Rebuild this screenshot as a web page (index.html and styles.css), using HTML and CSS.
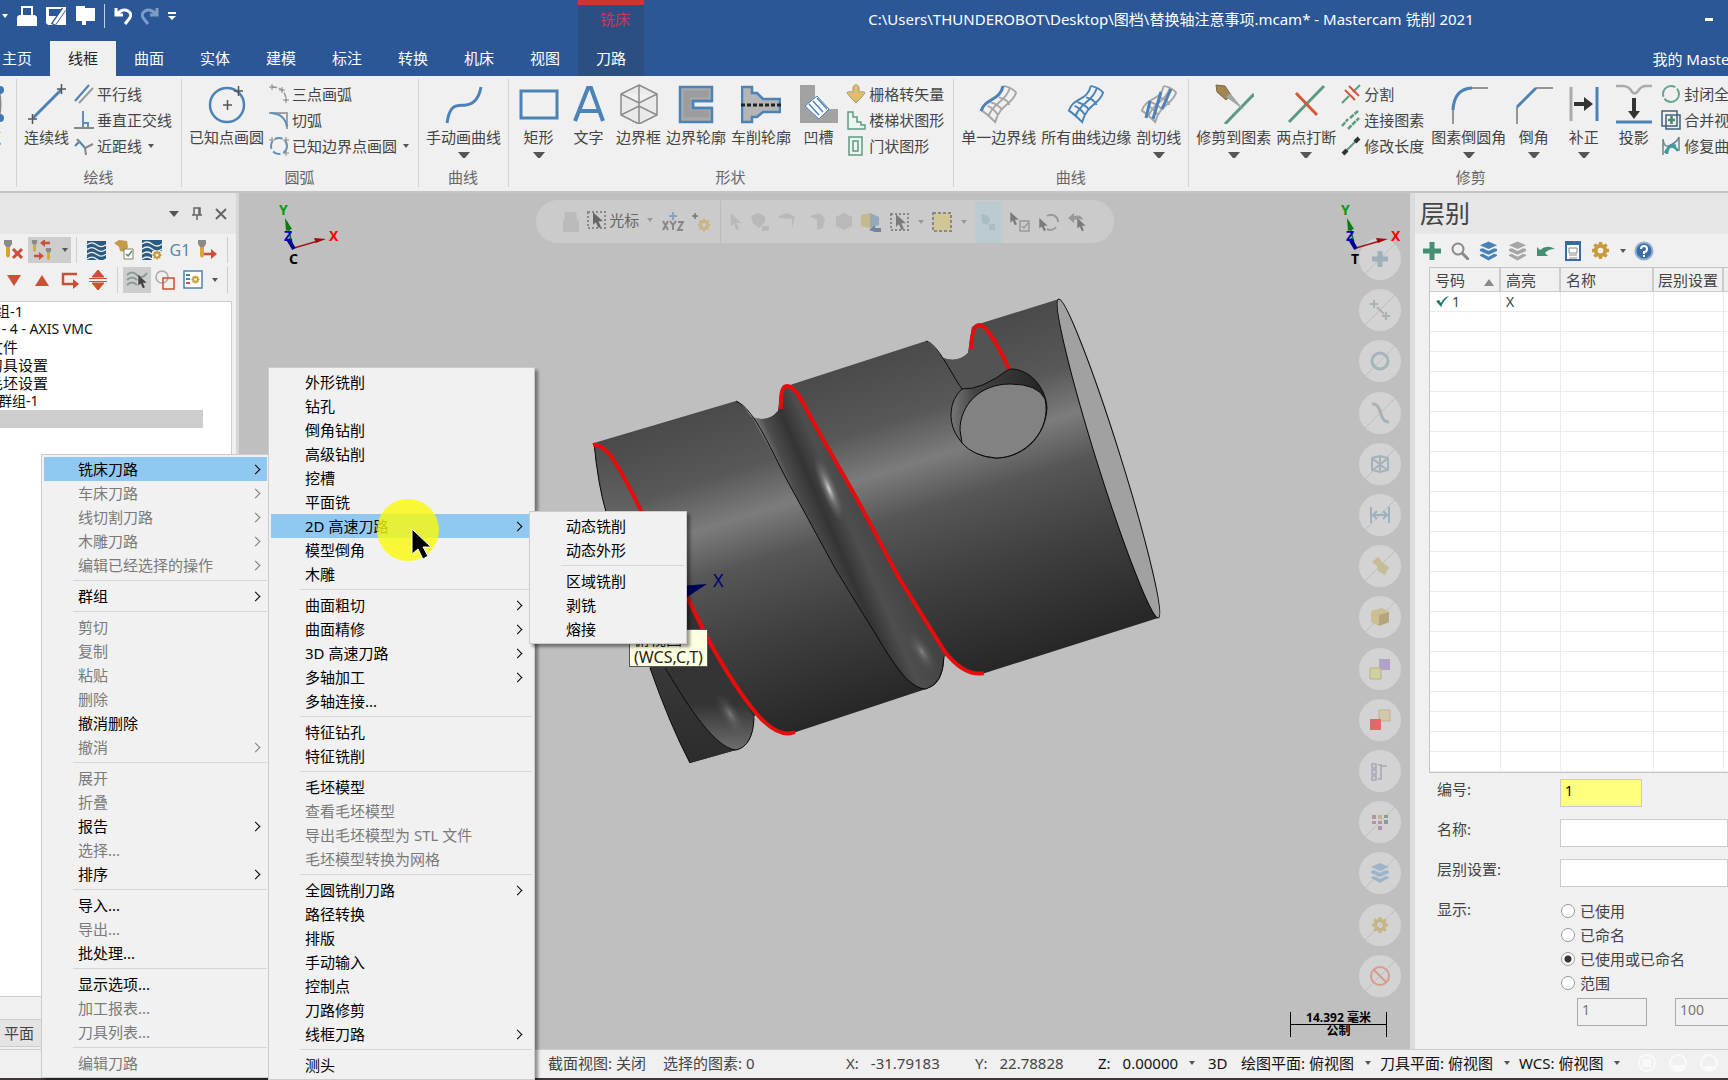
FILE: index.html
```html
<!DOCTYPE html>
<html lang="zh-CN">
<head>
    <meta charset="UTF-8">
    <meta name="viewport" content="width=device-width, initial-scale=1.0">
    <title>Mastercam 铣削 2021</title>
    <link rel="stylesheet" href="styles.css">
</head>
<body>
<svg class="defs" width="0" height="0">
    <symbol id="layers" viewBox="0 0 20 20"><path d="M10 0l9 4-9 4-9-4zM1 8l3-1 6 3 6-3 3 1v2l-9 4-9-4zM1 14l3-1 6 3 6-3 3 1v1l-9 5-9-5z" fill="currentColor"/></symbol>
    <symbol id="gear" viewBox="0 0 20 20"><circle cx="10" cy="10" r="5" fill="none" stroke="currentColor" stroke-width="4"/><path d="M10 1v3M10 16v3M1 10h3M16 10h3M3.600 3.600l2 2M14.400 14.400l2 2M16.400 3.600l-2 2M5.600 14.400l-2 2" stroke="currentColor" stroke-width="3.500"/></symbol>
    <symbol id="pointer" viewBox="0 0 12 20"><path d="M0 0v15l3.500-3 3 7 3-1.500-3-6.500H12z" fill="currentColor"/></symbol>
    <symbol id="waves" viewBox="0 0 20 20"><path d="M0 0h20v20H0z" fill="#2c5a80"/><path d="M0 4q5-4 10 0t10 0M0 9q5-4 10 0t10 0M0 14q5-4 10 0t10 0M0 19q5-4 10 0t10 0" fill="none" stroke="#eef3f6" stroke-width="1.300"/></symbol>
    <symbol id="tool" viewBox="0 0 8 18"><path d="M0 0h8v4L6 7H2L0 4z" fill="#8a8a8a"/><path d="M2 7h4v9l-2 2-2-2z" fill="#d6a62e"/></symbol>
    <symbol id="patch" viewBox="0 0 40 42"><path d="M25 2q9 2 13 7c-4 13-17 12-22 31Q8 32 2 28C6 14 22 18 25 2M31 5C27 19 13 20 9 34M20 14q9 2 11 8M11 19q9 3 12 8M8 23q7 3 11 10" fill="none" stroke="currentColor" stroke-width="2"/></symbol>
    <symbol id="gnomon" viewBox="0 0 70 70">
        <path d="M24 50L18 24" stroke="#087a08" stroke-width="1.500"/><path d="M16 20l7 11-6 2z" fill="#087a08"/>
        <path d="M25 50l24-7" stroke="#a01818" stroke-width="1.500"/><path d="M57 41l-12-1 2 5z" fill="#a00c0c"/>
        <path d="M25 51l-6-10" stroke="#000090" stroke-width="4"/>
    </symbol>
</svg>

<div class="app">
    <header class="header">
        <div class="header-left">
            <div class="quick">
                <i class="caret light"></i>
                <button aria-label="打印"><svg width="20" height="20"><path d="M4 0h12v9h2l2 2v9H0v-9l2-2h2z" fill="#fff"/><path d="M6 2h8v7H6z" fill="#2b5797"/></svg></button>
                <button aria-label="保存"><svg width="20" height="20"><path d="M0 1h20v18H2L0 17z" fill="#fff"/><path d="M3 3h12v7H3z" fill="#2b5797"/><path d="M7 19L18 3" stroke="#2b5797" stroke-width="5"/><path d="M8 18L19 2" stroke="#fff" stroke-width="3"/></svg></button>
                <button aria-label="图档"><svg width="20" height="20"><path d="M1 0h9v2h10v13h-9v4H7v-4H1z" fill="#fff"/></svg></button>
                <span class="quick-line"></span>
                <button aria-label="撤消"><svg width="18" height="18"><path d="M2 1v7h7M3 7Q9 1 14 4t1 8l-4 5" fill="none" stroke="#fff" stroke-width="3"/></svg></button>
                <button aria-label="重做"><svg width="18" height="18"><path d="M16 1v7H9M15 7Q9 1 4 4T3 12l4 5" fill="none" stroke="#7f9cc6" stroke-width="3"/></svg></button>
                <i class="caret light over"></i>
            </div>
            <nav class="tabs">
                <button>主页</button>
                <button class="active">线框</button>
                <button>曲面</button>
                <button>实体</button>
                <button>建模</button>
                <button>标注</button>
                <button>转换</button>
                <button>机床</button>
                <button>视图</button>
            </nav>
        </div>
        <div class="context-tab">
            <span>铣床</span>
            <button>刀路</button>
        </div>
        <div class="header-right">
            <div class="title-row">
                <h1>C:\Users\THUNDEROBOT\Desktop\图档\替换轴注意事项.mcam* - Mastercam 铣削 2021</h1>
                <button class="minimize" aria-label="最小化"></button>
            </div>
            <a href="#" class="my-mastercam">我的 Mastercam</a>
        </div>
    </header>

    <div class="ribbon">
        <section class="group group-cut">
            <div class="group-body">
                <button class="big"><svg width="40" height="40"><path d="M32 6q3 14 0 28" fill="none" stroke="#888" stroke-width="2"/><circle cx="33" cy="6" r="4" fill="#3f7ab5"/><circle cx="33" cy="34" r="4" fill="#3f7ab5"/></svg>绘点</button>
            </div>
        </section>
        <section class="group">
            <div class="group-body">
                <button class="big"><svg width="40" height="40"><path d="M6 34L34 6" stroke="#4c83b6" stroke-width="3"/><path d="M1 35h9M5.500 30v10M30 5h9M34.500 0v10" stroke="#555" stroke-width="1.500"/></svg>连续线</button>
                <div class="stack">
                    <button><svg width="20" height="20"><path d="M1 17L15 1" stroke="#4c83b6" stroke-width="2"/><path d="M5 19L19 4" stroke="#999" stroke-width="2"/></svg>平行线</button>
                    <button><svg width="20" height="20"><path d="M9 1v17M9 13h5v5" fill="none" stroke="#5f90bd" stroke-width="2"/><path d="M0 18h20" stroke="#888" stroke-width="2"/></svg>垂直正交线</button>
                    <button><svg width="20" height="20"><path d="M1 10l4-4M4 4l8 9" stroke="#4c83b6" stroke-width="2"/><path d="M3 3l3 4M19 8l-8 4 1 7" fill="none" stroke="#888" stroke-width="2"/></svg>近距线<i class="caret"></i></button>
                </div>
            </div>
            <h2>绘线</h2>
        </section>
        <section class="group">
            <div class="group-body">
                <button class="big"><svg width="40" height="40"><circle cx="20" cy="21" r="17" fill="none" stroke="#4c83b6" stroke-width="2.500"/><path d="M16 21h9M20.500 16v10M27 7h9M31.500 2v10" stroke="#555" stroke-width="1.500"/></svg>已知点画圆</button>
                <div class="stack">
                    <button><svg width="20" height="20"><path d="M3 3q14 0 14 14" fill="none" stroke="#999" stroke-width="1.500" stroke-dasharray="5 2"/><path d="M0 3h6M3 0v6M10 6h6M13 3v6M14 16h6M17 13v6" stroke="#888"/></svg>三点画弧</button>
                    <button><svg width="20" height="20"><path d="M0 3h17M18 2v17" stroke="#888" stroke-width="1.500"/><path d="M2 3q14 1 16 14" fill="none" stroke="#5f90bd" stroke-width="2"/></svg>切弧</button>
                    <button><svg width="20" height="20"><circle cx="10" cy="10" r="8" fill="none" stroke="#5f90bd" stroke-width="2" stroke-dasharray="8 3"/><path d="M0 4h6M3 1v6M14 4h6M17 1v6M14 17h6M17 14v6" stroke="#888"/></svg>已知边界点画圆<i class="caret"></i></button>
                </div>
            </div>
            <h2>圆弧</h2>
        </section>
        <section class="group">
            <div class="group-body">
                <button class="big"><svg width="40" height="40"><path d="M3 39C6 18 14 22 22 21S35 14 37 3" fill="none" stroke="#4c83b6" stroke-width="3"/></svg>手动画曲线<i class="drop"></i></button>
            </div>
            <h2>曲线</h2>
        </section>
        <section class="group">
            <div class="group-body">
                <button class="big"><svg width="40" height="40"><path d="M2 7h36v27H2z" fill="none" stroke="#4c83b6" stroke-width="3"/></svg>矩形<i class="drop"></i></button>
                <button class="big"><svg width="40" height="40"><path d="M6 37L19 4h3l12 33M11 27h19" fill="none" stroke="#4c83b6" stroke-width="4"/></svg>文字</button>
                <button class="big"><svg width="40" height="40"><path d="M20 1l18 9v21l-18 9-18-9V10zM2 10l18 9 18-9M20 19v21M2 31l18-9 18 9M20 1v21" fill="#e4e4e4" fill-opacity=".5" stroke="#8b8b8b" stroke-width="1.500"/></svg>边界框</button>
                <button class="big"><svg width="40" height="40"><path d="M4 3h32v14H17v7h19v14H4z" fill="#aaa" stroke="#4c83b6" stroke-width="2.500"/><path d="M33 10H11v20h22" fill="none" stroke="#9c9c9c" stroke-width="7"/><path d="M36 17H17v7h19" fill="none" stroke="#4c83b6" stroke-width="2.500"/></svg>边界轮廓</button>
                <button class="big"><svg width="40" height="40"><path d="M1 3h10v6h5l6 6h17v13H22l-6 5h-5v5H1z" fill="#b5b5b5" stroke="#4c83b6" stroke-width="2.500"/><path d="M0 21h40" stroke="#222" stroke-width="3" stroke-dasharray="4 2"/></svg>车削轮廓</button>
                <button class="big"><svg width="40" height="40"><path d="M1 1h15v17l13 7h10v14H1z" fill="#a2a2a2"/><path d="M18 12l12 13-10 10L6 22z" fill="#fff" stroke="#4c83b6"/><path d="M18 14l10 11M14 17l10 11M10 20l10 11" stroke="#4c83b6" stroke-width="1.500"/></svg>凹槽</button>
                <div class="stack">
                    <button><svg width="20" height="20"><path d="M7 3q3-5 6 0v5q6-1 6 1l-4 5-5 5-5-5-4-5q0-2 6-1z" fill="#e0bd6c" stroke="#a69a80"/></svg>栅格转矢量</button>
                    <button><svg width="20" height="20"><path d="M2 2h5v5h4v5h4v3h4v4H2z" fill="#edf5f0" stroke="#5d9b80" stroke-width="1.500"/></svg>楼梯状图形</button>
                    <button><svg width="20" height="20"><path d="M3 1h13v18H3zM7 5h5v10H7z" fill="#edf5f0" stroke="#5d9b80" stroke-width="1.500"/></svg>门状图形</button>
                </div>
            </div>
            <h2>形状</h2>
        </section>
        <section class="group">
            <div class="group-body">
                <button class="big"><svg class="grey-icon" width="40" height="40"><use href="#patch"/><path d="M24 2C21 17 6 14 2 27" fill="none" stroke="#4c83b6" stroke-width="3"/></svg>单一边界线</button>
                <button class="big"><svg class="blue-icon" width="40" height="40"><use href="#patch"/></svg>所有曲线边缘</button>
                <button class="big"><svg class="grey-icon" width="40" height="40"><use href="#patch"/><path d="M11 17L7 34M22 8l-8 27M32 5l-9 20" stroke="#4c83b6" stroke-width="3"/></svg>剖切线<i class="drop"></i></button>
            </div>
            <h2>曲线</h2>
        </section>
        <section class="group">
            <div class="group-body">
                <button class="big"><svg width="40" height="40"><path d="M11 40L40 10" stroke="#5d9b80" stroke-width="3"/><path d="M2 1l9 1 6 9-5 5L3 8z" fill="#a38552" stroke="#7c653e"/><path d="M12 13l4-4 14 17z" fill="#a0a5a5"/></svg>修剪到图素<i class="drop"></i></button>
                <button class="big"><svg width="40" height="40"><path d="M3 38L38 2" stroke="#5d9b80" stroke-width="3"/><path d="M10 9l21 22" stroke="#d4573b" stroke-width="3"/></svg>两点打断<i class="drop"></i></button>
                <div class="stack">
                    <button><svg width="20" height="20"><path d="M1 19l7-7M12 8l7-7" stroke="#5d9b80" stroke-width="2"/><path d="M4 6l10 10M8 2l10 10" stroke="#d4573b" stroke-width="2"/></svg>分割</button>
                    <button><svg width="20" height="20"><path d="M1 16L7 9M9 8l8-7M7 19l11-11" stroke="#5d9b80" stroke-width="2.500" stroke-dasharray="5 1"/></svg>连接图素</button>
                    <button><svg width="20" height="20"><path d="M5 15L15 5" stroke="#5d9b80" stroke-width="2"/><path d="M2 18l4-4M14 6l4-4" stroke="#333" stroke-width="4"/></svg>修改长度</button>
                </div>
                <button class="big"><svg width="40" height="40"><path d="M4 40V26M22 4h17" stroke="#777" stroke-width="1.500"/><path d="M4 26Q5 5 23 4" fill="none" stroke="#4c83b6" stroke-width="3"/></svg>图素倒圆角<i class="drop"></i></button>
                <button class="big"><svg width="40" height="40"><path d="M3 40V23M22 4h17" stroke="#777" stroke-width="1.500"/><path d="M3 23L22 4" stroke="#4c83b6" stroke-width="3"/></svg>倒角<i class="drop"></i></button>
                <button class="big"><svg width="40" height="40"><path d="M7 3v34" stroke="#aaa" stroke-width="3"/><path d="M33 3v34" stroke="#4c83b6" stroke-width="3"/><path d="M10 18h10v-5l9 7-9 7v-5H10z" fill="#333"/></svg>补正<i class="drop"></i></button>
                <button class="big"><svg width="40" height="40"><path d="M2 2h7q6 0 9 6 3 3 6-1 3-5 8-5h6" fill="none" stroke="#aaa" stroke-width="2.500"/><path d="M18 14h4v13h4l-6 8-6-8h4z" fill="#333"/><path d="M2 38h36" stroke="#4c83b6" stroke-width="3"/></svg>投影</button>
                <div class="stack">
                    <button><svg width="20" height="20"><circle cx="10" cy="10" r="8" fill="none" stroke="#6aa58b" stroke-width="2" stroke-dasharray="20 2"/></svg>封闭全圆</button>
                    <button><svg width="20" height="20"><path d="M1 1h15v15H1zM5 5h14v14H5z" fill="none" stroke="#40607c" stroke-width="1.500"/><path d="M7 10h7M10.500 6v8" stroke="#478a6d" stroke-width="2.500"/></svg>合并视图</button>
                    <button><svg width="20" height="20"><path d="M2 19V3q1 10 8 6t8-8v14" fill="none" stroke="#6a8590" stroke-width="1.500"/><path d="M4 17q6-12 13-2M15 10q-8-3-9 8" fill="none" stroke="#3f9a9e" stroke-width="2.500"/></svg>修复曲线</button>
                </div>
            </div>
            <h2>修剪</h2>
        </section>
    </div>

    <main class="workspace">
        <aside class="toolpaths">
            <div class="panel-head">
                <i class="drop"></i>
                <button aria-label="固定"><svg width="12" height="14"><path d="M3 1h6v7H3zM1 8h10M6 8v5M8 1v7" fill="none" stroke="#666" stroke-width="1.500"/></svg></button>
                <button aria-label="关闭"><svg width="12" height="12"><path d="M1 1l10 10M11 1L1 11" stroke="#666" stroke-width="2"/></svg></button>
            </div>
            <div class="panel-tools">
                <div class="tool-row">
                    <button aria-label="删除"><svg width="20" height="20"><use href="#tool" width="8" height="18"/><path d="M9 9l9 9M18 9l-9 9" stroke="#cd4f35" stroke-width="3"/></svg></button>
                    <button class="wide on" aria-label="切换"><svg width="22" height="20"><use href="#tool" width="7" height="12"/><use href="#tool" x="14" y="8" width="7" height="12"/><path d="M19 3h-7M3 16h7" stroke="#cd4f35" stroke-width="2.500"/><path d="M9 3l5-4v8zM13 16l-5-4v8z" fill="#cd4f35"/></svg><i class="caret"></i></button>
                    <span class="tool-line"></span>
                    <button aria-label="重新计算"><svg width="19" height="19"><use href="#waves"/></svg></button>
                    <button aria-label="验证"><svg width="20" height="20"><path d="M0 3l5-3 8 1 1 6-3 5-5-1-1-4z" fill="#c49b4a"/><path d="M10 9h9v10h-9z" fill="#fff" stroke="#8a8058"/><path d="M12 14l2 2 4-5" fill="none" stroke="#478a6d" stroke-width="1.500"/></svg></button>
                    <button aria-label="模拟"><svg width="20" height="20"><use href="#waves"/><path d="M10 11h10v9H10z" fill="#f0f0f0"/><use href="#gear" class="gold" x="10" y="10" width="10" height="10"/></svg></button>
                    <button class="g1">G1</button>
                    <button aria-label="进给"><svg width="20" height="20"><use href="#tool" width="8" height="18"/><path d="M6 14h8" stroke="#cd4f35" stroke-width="2.500"/><path d="M19 14l-6-5v10z" fill="#cd4f35"/></svg></button>
                </div>
                <div class="tool-row">
                    <button aria-label="下移"><svg width="16" height="12"><path d="M1 1h14L8 12z" fill="#cd4f35"/></svg></button>
                    <button aria-label="上移"><svg width="16" height="12"><path d="M1 12h14L8 1z" fill="#cd4f35"/></svg></button>
                    <button aria-label="插入"><svg width="18" height="18"><path d="M16 3H2v10h11" fill="none" stroke="#cd4f35" stroke-width="2.500"/><path d="M18 13l-6-5v10z" fill="#cd4f35"/></svg></button>
                    <button aria-label="滚动"><svg width="18" height="20"><path d="M9 0l6 7H3zM9 20l6-7H3zM0 8.500h18M0 11.500h18" fill="#cd4f35" stroke="#cd4f35"/></svg></button>
                    <span class="tool-line"></span>
                    <button class="on" aria-label="显示刀路"><svg width="22" height="20"><path d="M1 5q5-5 10 0t10-2M1 10q5-5 10 0M1 15q5-5 10 0" fill="none" stroke="#8b9a96" stroke-width="2"/><use href="#pointer" x="12" y="5" width="9" height="14"/></svg></button>
                    <button aria-label="显示几何"><svg width="20" height="20"><circle cx="7" cy="7" r="6" fill="none" stroke="#aaa" stroke-width="1.500"/><path d="M8 8h11v11H8z" fill="none" stroke="#cd4f35" stroke-width="1.500"/></svg></button>
                    <button aria-label="选项"><svg width="20" height="20"><path d="M1 1h18v17H1z" fill="#fff" stroke="#4c83b6" stroke-width="1.500"/><path d="M3 5h4" stroke="#478a6d" stroke-width="2"/><path d="M3 9h4" stroke="#4c83b6" stroke-width="2"/><path d="M3 13h4" stroke="#cd4f35" stroke-width="2"/><use href="#gear" class="gold" x="8" y="5" width="9" height="9"/></svg></button>
                    <i class="caret"></i>
                </div>
            </div>
            <ul class="tree">
                <li>机床群组-1</li>
                <li class="level-1">属性 - 4 - AXIS VMC</li>
                <li class="level-2">文件</li>
                <li class="level-2">刀具设置</li>
                <li class="level-2">毛坯设置</li>
                <li class="level-1">刀路群组-1</li>
                <li class="selected"></li>
            </ul>
            <div class="panel-tabs"><button>平面</button></div>
        </aside>

        <div class="viewport">
            <svg class="part" viewBox="580 290 590 490">
                <defs>
                    <linearGradient id="body" gradientUnits="userSpaceOnUse" x1="1058" y1="299" x2="1158" y2="618">
                        <stop offset="0" stop-color="#4a4a4a"/>
                        <stop offset=".2" stop-color="#585858"/>
                        <stop offset=".34" stop-color="#7c7c7c"/>
                        <stop offset=".48" stop-color="#565656"/>
                        <stop offset=".7" stop-color="#404040"/>
                        <stop offset="1" stop-color="#272727"/>
                    </linearGradient>
                    <linearGradient id="groove" gradientUnits="userSpaceOnUse" x1="786" y1="492" x2="856" y2="462">
                        <stop offset="0" stop-color="#777"/>
                        <stop offset=".12" stop-color="#4c4c4c"/>
                        <stop offset=".35" stop-color="#343434"/>
                        <stop offset=".6" stop-color="#4e4e4e"/>
                        <stop offset="1" stop-color="#434343"/>
                    </linearGradient>
                    <linearGradient id="low" x1="0" y1="0" x2="0" y2="1">
                        <stop offset="0" stop-color="#333"/>
                        <stop offset=".7" stop-color="#343434"/>
                        <stop offset="1" stop-color="#6d6d6d"/>
                    </linearGradient>
                    <linearGradient id="wall" x1="0" y1="0" x2="0" y2="1">
                        <stop offset="0" stop-color="#4d4d4d"/>
                        <stop offset=".25" stop-color="#666"/>
                        <stop offset=".6" stop-color="#3c3c3c"/>
                        <stop offset="1" stop-color="#2c2c2c"/>
                    </linearGradient>
                    <linearGradient id="hole" x1="0" y1="0" x2="1" y2="0">
                        <stop offset="0" stop-color="#777"/>
                        <stop offset=".25" stop-color="#444"/>
                        <stop offset="1" stop-color="#222"/>
                    </linearGradient>
                    <radialGradient id="shine"><stop offset="0" stop-color="#d5d5d5"/><stop offset=".4" stop-color="#909090" stop-opacity=".6"/><stop offset="1" stop-color="#666" stop-opacity="0"/></radialGradient>
                </defs>
                <path d="M594 443L736 401C742 403 748 412 752 417Q768 423 778 411L781 389 793 384 926 341C933 344 939 353 943 358Q958 363 968 353L972 327 982 323 1059 299 1158 618 985 673Q965 675 947 655L944 657Q944 684 926 689L796 732Q776 736 756 713L754 718Q753 746 736 750L690 763Q670 725 650 668L606 512Q597 480 594 443z" fill="url(#body)"/>
                <path d="M752 417Q768 423 778 411L782 387Q789 380 798 395C812 416 824 441 836 462L878 540 924 620 947 655 944 657Q944 684 926 689C909 687 899 669 878 638Q865 618 836 570L794 493z" fill="url(#groove)"/>
                <path d="M594 443L606 512 650 668 690 763 736 750C700 740 670 670 645 600L642 512 610 453z" fill="url(#wall)"/>
                <path d="M665 668C680 692 712 748 736 750Q753 746 754 718L709 640 688 598 655 600z" fill="url(#low)"/>
                <path d="M943 358Q958 363 968 353L972 327Q981 318 992 335L1010 369Q985 390 962 389z" fill="#535353"/>
                <ellipse cx="829" cy="489" rx="36" ry="8" transform="rotate(68 829 489)" fill="url(#shine)"/>
                <ellipse cx="922" cy="652" rx="24" ry="9" transform="rotate(58 922 652)" fill="url(#shine)" opacity=".4"/>
                <ellipse cx="730" cy="714" rx="24" ry="9" transform="rotate(58 730 714)" fill="url(#shine)" opacity=".4"/>
                <path d="M736 401C756 410 770 450 794 493L836 570 878 638C893 663 909 689 926 689Q943 684 944 657M665 668C680 692 712 748 736 750Q753 746 754 718M926 341C938 344 950 372 962 389M594 443Q598 485 606 512M650 668Q670 725 690 763" fill="none" stroke="#0a0a0a"/>
                <path d="M962 389Q982 390 1009 369C1030 368 1046 388 1047 408C1045 440 1020 458 996 458C970 457 950 437 951 413Q952 398 962 389z" fill="url(#hole)" stroke="#0a0a0a"/>
                <path d="M960 430C960 405 980 384 1010 384Q1038 384 1045 399C1052 430 1025 458 996 458Q973 456 962 443z" fill="#828282" stroke="#0a0a0a"/>
                <ellipse cx="1108.500" cy="458.500" rx="167" ry="12" transform="rotate(72.600 1108.500 458.500)" fill="#a1a1a1" stroke="#0a0a0a"/>
                <path d="M593 445Q600 443 611 456C626 479 633 494 642 513L688 599 709 641C724 668 741 695 756 713Q778 739 795 732M781 409Q780 386 787 386C797 386 806 410 815 425L857 499 899 578 945 652Q965 677 984 673M971 349Q972 325 979 325C988 325 1001 352 1009 369" fill="none" stroke="#e80d0d" stroke-width="4"/>
                <path d="M680 586l27-2-20 13z" fill="#00005c"/>
                <text x="713" y="587" class="axis-x">X</text>
            </svg>

            <div class="triad triad-left"><svg width="70" height="70"><use href="#gnomon"/><text x="10" y="17">Y</text><text class="t-x" x="60" y="43">X</text><text class="t-z" x="15" y="43">Z</text><text class="t-o" x="20" y="66">C</text></svg></div>
            <div class="triad triad-right"><svg width="70" height="70"><use href="#gnomon"/><text x="10" y="17">Y</text><text class="t-x" x="60" y="43">X</text><text class="t-z" x="15" y="43">Z</text><text class="t-o" x="20" y="66">T</text></svg></div>

            <div class="select-bar">
                <svg width="16" height="20"><path d="M0 9h16v11H0zM3 9V1h9v8" fill="#bbb" stroke="#bbb" stroke-width="3"/></svg>
                <button class="cursor-mode"><svg width="20" height="20"><path d="M1 2h17v16H1z" fill="none" stroke="#888" stroke-width="2" stroke-dasharray="2 2"/><use href="#pointer" x="6" y="2" width="10" height="17"/></svg>光标<i class="caret"></i></button>
                <svg width="22" height="20"><path d="M11 0v8M7 4h8" stroke="#8aa3b8" stroke-width="2"/><path d="M1 9l5 9M6 9l-5 9M8 9l3 4 3-4M11 13v5M16 10h5l-5 8h5" fill="none" stroke="#888" stroke-width="2"/></svg>
                <svg width="20" height="20"><path d="M0 4h6M3 1v6" stroke="#777" stroke-width="1.500"/><use href="#gear" class="pale-gold" x="5" y="6" width="14" height="14"/></svg>
                <span class="bar-line"></span>
                <svg class="faint" width="12" height="18"><use href="#pointer"/></svg>
                <svg class="faint" width="20" height="20"><path d="M1 4l7-3 7 3v6l-6 6-6-5zM12 14h7v5h-7z" fill="currentColor"/></svg>
                <svg class="faint" width="20" height="20"><path d="M1 4l8-3 8 4-3 11V7L1 6z" fill="currentColor"/></svg>
                <svg class="faint" width="20" height="20"><path d="M3 4l9-3 6 5-2 10-6 2V8z" fill="currentColor"/></svg>
                <svg class="faint" width="18" height="20"><path d="M1 5l8-4 8 4v9l-8 4-8-4z" fill="currentColor"/></svg>
                <svg width="20" height="20"><path d="M0 3l9-2v15l-9-2z" fill="#c5b98e"/><path d="M9 1l9 4v8l-9 3z" fill="#96a9b9"/><path d="M8 18l6-5v3h6v4h-6z" fill="#74859a"/></svg>
                <svg width="20" height="20"><path d="M1 2h17v16H1z" fill="none" stroke="#888" stroke-width="2" stroke-dasharray="2 2"/><use href="#pointer" x="6" y="2" width="10" height="17"/></svg>
                <i class="caret"></i>
                <svg width="20" height="20"><path d="M1 1h18v18H1z" fill="#d3c696" stroke="#888" stroke-width="2" stroke-dasharray="3 2"/></svg>
                <i class="caret"></i>
                <span class="bar-on"><svg width="18" height="20"><path d="M2 2l6 1 3 5-2 5-6-2zM10 12h6v6h-6z" fill="#a9bdc4"/></svg></span>
                <svg width="20" height="20"><use href="#pointer" width="9" height="14"/><path d="M10 9h9v10h-9zM12 14l2 2 4-5" fill="none" stroke="#999" stroke-width="1.500"/></svg>
                <svg width="20" height="20"><path d="M8 4a7 7 0 0 1 11 6M17 15a7 7 0 0 1-9 2" fill="none" stroke="#999" stroke-width="2"/><use href="#pointer" y="6" width="9" height="14"/></svg>
                <svg width="20" height="20"><path d="M1 6l6-5v3q8-2 9 4Q12 6 7 8v3z" fill="#999"/><use href="#pointer" x="10" y="6" width="9" height="14"/></svg>
            </div>

            <div class="quick-masks">
                <button aria-label="点"><svg width="42" height="42"><path d="M21 13v16M13 21h16" stroke="#9fb0ba" stroke-width="5"/></svg></button>
                <button aria-label="线"><svg width="42" height="42"><path d="M11 15h8M15 11v8M23 27h8M27 23v8M18 18l7 7" stroke="#a9b1b3" stroke-width="2"/></svg></button>
                <button aria-label="圆"><svg width="42" height="42"><circle cx="21" cy="21" r="8" fill="none" stroke="#a5b6b9" stroke-width="3"/></svg></button>
                <button aria-label="曲线"><svg width="42" height="42"><path d="M13 12c11-1 6 18 17 18" fill="none" stroke="#a8b1b5" stroke-width="3"/></svg></button>
                <button aria-label="网格"><svg width="42" height="42"><path d="M13 15l8-2 8 2v12l-8 2-8-2zM21 13v16M14 16l14 11M28 16L14 27" fill="none" stroke="#a3b3bb" stroke-width="2"/></svg></button>
                <button aria-label="标注"><svg width="42" height="42"><path d="M12 13v16M30 13v16M13 21h16M18 17l-4 4 4 4M24 17l4 4-4 4" fill="none" stroke="#9db2bd" stroke-width="2"/></svg></button>
                <button aria-label="曲面"><svg width="42" height="42"><path d="M13 17l6-5 5 6 6 4-4 8-7-4-1-5z" fill="#c4bd95"/></svg></button>
                <button aria-label="实体"><svg width="42" height="42"><path d="M12 15l11-3 7 4v10l-10 4-8-4z" fill="#cdbf91"/><path d="M20 19l10-3v10l-10 4z" fill="#b3a57c"/></svg></button>
                <button aria-label="群组" class="no-slash"><svg width="42" height="42"><path d="M20 11h11v11H20z" fill="#b0a3c7"/><path d="M11 20h11v11H11z" fill="#d2d09f" stroke="#b5b18a"/></svg></button>
                <button aria-label="结果" class="no-slash"><svg width="42" height="42"><path d="M20 11h11v11H20z" fill="#d3c8a9" stroke="#bfb38e"/><path d="M11 20h11v11H11z" fill="#e06a6a"/></svg></button>
                <button aria-label="命名" class="no-slash"><svg width="42" height="42"><path d="M13 14h4v4h-4zM13 20h4v4h-4zM13 26h4v4h-4zM19 15h3v14h-3M22 16h6" fill="none" stroke="#a6a6b8" stroke-width="1.500"/></svg></button>
                <button aria-label="颜色"><svg width="42" height="42"><path d="M13 14h4v4h-4zM13 20h4v3h-4z" fill="#b393a8"/><path d="M19 14h4v4h-4z" fill="#c8b18a"/><path d="M25 14h4v3h-4zM25 19h4v4h-4z" fill="#849e91"/><path d="M19 20h4v3h-4zM19 25h4v4h-4z" fill="#b98ea9"/></svg></button>
                <button aria-label="层别"><svg width="42" height="42"><use href="#layers" class="pale-blue" x="11" y="11" width="20" height="20"/></svg></button>
                <button aria-label="设置"><svg width="42" height="42"><use href="#gear" class="pale-gold" x="12" y="12" width="18" height="18"/></svg></button>
                <button aria-label="清除"><svg width="42" height="42"><circle cx="21" cy="21" r="9" fill="none" stroke="#d89b8c" stroke-width="2"/><path d="M15 15l12 12" stroke="#d89b8c" stroke-width="2"/></svg></button>
            </div>

            <div class="tip">俯视图<br>(WCS,C,T)</div>
            <div class="scale"><span>14.392 毫米</span><span>公制</span></div>
        </div>

        <aside class="levels">
            <h2>层别</h2>
            <div class="level-tools">
                <button aria-label="添加"><svg width="18" height="18"><path d="M9 0v18M0 9h18" stroke="#459072" stroke-width="5"/></svg></button>
                <button aria-label="查找"><svg width="18" height="18"><circle cx="7" cy="7" r="5.500" fill="none" stroke="#888" stroke-width="2"/><path d="M11 11l7 7" stroke="#888" stroke-width="3"/></svg></button>
                <button class="blue-icon" aria-label="全部显示"><svg width="19" height="20"><use href="#layers"/></svg></button>
                <button class="grey-icon" aria-label="全部隐藏"><svg width="19" height="20"><use href="#layers"/></svg></button>
                <button aria-label="重置"><svg width="18" height="14"><path d="M0 12V3l3 3q7-6 15-1-7 0-10 4l3 3z" fill="#459072"/></svg></button>
                <button aria-label="报告"><svg width="16" height="20"><path d="M1 1h14v18H1z" fill="#fff" stroke="#386ba3" stroke-width="2"/><path d="M1 3h14" stroke="#386ba3" stroke-width="2"/><path d="M4 7h8v5H4zM4 14h8M4 17h8" fill="none" stroke="#888"/></svg></button>
                <button class="gold" aria-label="选项"><svg width="19" height="19"><use href="#gear"/></svg></button>
                <i class="caret"></i>
                <button aria-label="帮助"><svg width="20" height="20"><circle cx="10" cy="10" r="8.500" fill="#3c6da6" stroke="#8fb0d2" stroke-width="2"/><path d="M7 8q0-3 3-3t3 3-3 3v2M10 14v2" fill="none" stroke="#fff" stroke-width="2"/></svg></button>
            </div>
            <div class="grid">
                <table>
                    <thead>
                        <tr><th class="c-num">号码<i class="sort"></i></th><th class="c-hi">高亮</th><th class="c-name">名称</th><th class="c-set">层别设置</th><th></th></tr>
                    </thead>
                    <tbody>
                        <tr><td><svg width="15" height="12"><path d="M1 6l3-1 2 3q3-6 8-7Q9 5 6 12z" fill="#1c7a62"/></svg>1</td><td>X</td><td></td><td></td><td></td></tr>
                        <tr><td></td><td></td><td></td><td></td><td></td></tr>
                        <tr><td></td><td></td><td></td><td></td><td></td></tr>
                        <tr><td></td><td></td><td></td><td></td><td></td></tr>
                        <tr><td></td><td></td><td></td><td></td><td></td></tr>
                        <tr><td></td><td></td><td></td><td></td><td></td></tr>
                        <tr><td></td><td></td><td></td><td></td><td></td></tr>
                        <tr><td></td><td></td><td></td><td></td><td></td></tr>
                        <tr><td></td><td></td><td></td><td></td><td></td></tr>
                        <tr><td></td><td></td><td></td><td></td><td></td></tr>
                        <tr><td></td><td></td><td></td><td></td><td></td></tr>
                        <tr><td></td><td></td><td></td><td></td><td></td></tr>
                        <tr><td></td><td></td><td></td><td></td><td></td></tr>
                        <tr><td></td><td></td><td></td><td></td><td></td></tr>
                        <tr><td></td><td></td><td></td><td></td><td></td></tr>
                        <tr><td></td><td></td><td></td><td></td><td></td></tr>
                        <tr><td></td><td></td><td></td><td></td><td></td></tr>
                        <tr><td></td><td></td><td></td><td></td><td></td></tr>
                        <tr><td></td><td></td><td></td><td></td><td></td></tr>
                        <tr><td></td><td></td><td></td><td></td><td></td></tr>
                        <tr><td></td><td></td><td></td><td></td><td></td></tr>
                        <tr><td></td><td></td><td></td><td></td><td></td></tr>
                        <tr><td></td><td></td><td></td><td></td><td></td></tr>
                        <tr><td></td><td></td><td></td><td></td><td></td></tr>
                    </tbody>
                </table>
            </div>
            <form class="level-form">
                <label for="num">编号:</label>
                <input type="text" id="num" class="number" value="1">
                <label for="name">名称:</label>
                <input type="text" id="name">
                <label for="set">层别设置:</label>
                <input type="text" id="set">
                <span>显示:</span>
                <div class="radios">
                    <label><input type="radio" name="show">已使用</label>
                    <label><input type="radio" name="show">已命名</label>
                    <label><input type="radio" name="show" checked>已使用或已命名</label>
                    <label><input type="radio" name="show">范围</label>
                    <div class="range">
                        <input type="text" value="1" aria-label="从" disabled>
                        <input type="text" value="100" aria-label="到" disabled>
                    </div>
                </div>
            </form>
        </aside>
    </main>

    <footer class="status">
        <span class="s-view">截面视图: 关闭</span>
        <span class="s-sel">选择的图素: 0</span>
        <span class="s-x">X:<b>-31.79183</b></span>
        <span class="s-y">Y:<b>22.78828</b></span>
        <button class="s-z">Z:<b>0.00000</b><i class="caret"></i></button>
        <button class="s-3d">3D</button>
        <button class="s-plane">绘图平面: 俯视图<i class="caret"></i></button>
        <button class="s-plane">刀具平面: 俯视图<i class="caret"></i></button>
        <button class="s-wcs">WCS: 俯视图<i class="caret"></i></button>
        <span class="shades"><svg width="18" height="18"><circle cx="9" cy="9" r="8" fill="none" stroke="#fafafa" stroke-width="2"/><path d="M5 5h8v8H5z" fill="#fafafa"/></svg><svg width="18" height="18"><circle cx="9" cy="9" r="8" fill="none" stroke="#fafafa" stroke-width="2"/><path d="M2 11h14l-4 5H6z" fill="#fafafa"/></svg><svg width="18" height="18"><circle cx="9" cy="9" r="8" fill="none" stroke="#fafafa" stroke-width="2"/><path d="M4 12h11l-4 4H6z" fill="#fafafa"/></svg></span>
    </footer>
</div>

<menu class="menu menu-main">
    <li><button class="sub open">铣床刀路</button></li>
    <li><button class="sub" disabled>车床刀路</button></li>
    <li><button class="sub" disabled>线切割刀路</button></li>
    <li><button class="sub" disabled>木雕刀路</button></li>
    <li><button class="sub" disabled>编辑已经选择的操作</button></li>
    <li class="sep"></li>
    <li><button class="sub">群组</button></li>
    <li class="sep"></li>
    <li><button disabled>剪切</button></li>
    <li><button disabled>复制</button></li>
    <li><button disabled>粘贴</button></li>
    <li><button disabled>删除</button></li>
    <li><button>撤消删除</button></li>
    <li><button class="sub" disabled>撤消</button></li>
    <li class="sep"></li>
    <li><button disabled>展开</button></li>
    <li><button disabled>折叠</button></li>
    <li><button class="sub">报告</button></li>
    <li><button disabled>选择...</button></li>
    <li><button class="sub">排序</button></li>
    <li class="sep"></li>
    <li><button>导入...</button></li>
    <li><button disabled>导出...</button></li>
    <li><button>批处理...</button></li>
    <li class="sep"></li>
    <li><button>显示选项...</button></li>
    <li><button disabled>加工报表...</button></li>
    <li><button disabled>刀具列表...</button></li>
    <li class="sep"></li>
    <li><button disabled>编辑刀路</button></li>
</menu>

<menu class="menu menu-mill">
    <li><button>外形铣削</button></li>
    <li><button>钻孔</button></li>
    <li><button>倒角钻削</button></li>
    <li><button>高级钻削</button></li>
    <li><button>挖槽</button></li>
    <li><button>平面铣</button></li>
    <li><button class="sub open">2D 高速刀路</button></li>
    <li><button>模型倒角</button></li>
    <li><button>木雕</button></li>
    <li class="sep"></li>
    <li><button class="sub">曲面粗切</button></li>
    <li><button class="sub">曲面精修</button></li>
    <li><button class="sub">3D 高速刀路</button></li>
    <li><button class="sub">多轴加工</button></li>
    <li><button>多轴连接...</button></li>
    <li class="sep"></li>
    <li><button>特征钻孔</button></li>
    <li><button>特征铣削</button></li>
    <li class="sep"></li>
    <li><button>毛坯模型</button></li>
    <li><button disabled>查看毛坯模型</button></li>
    <li><button disabled>导出毛坯模型为 STL 文件</button></li>
    <li><button disabled>毛坯模型转换为网格</button></li>
    <li class="sep"></li>
    <li><button class="sub">全圆铣削刀路</button></li>
    <li><button>路径转换</button></li>
    <li><button>排版</button></li>
    <li><button>手动输入</button></li>
    <li><button>控制点</button></li>
    <li><button>刀路修剪</button></li>
    <li><button class="sub">线框刀路</button></li>
    <li class="sep"></li>
    <li><button>测头</button></li>
</menu>

<menu class="menu menu-hst">
    <li><button>动态铣削</button></li>
    <li><button>动态外形</button></li>
    <li class="sep"></li>
    <li><button>区域铣削</button></li>
    <li><button>剥铣</button></li>
    <li><button>熔接</button></li>
</menu>

<div class="click-spot"><svg width="62" height="62"><path d="M35 30v25l6-5 5 10 5-3-5-9h8z" fill="#000" stroke="#fff"/></svg></div>
</body>
</html>
```

FILE: styles.css
```css
* {
    box-sizing: border-box;
}

body {
    margin: 0;
    overflow: hidden;
    font-family: "Noto Sans", "Noto Sans CJK SC", sans-serif;
    font-size: 15px;
    line-height: 20px;
    color: #444;
}

button {
    margin: 0;
    padding: 0;
    border: none;
    background: none;
    font: inherit;
    color: inherit;
    white-space: nowrap;
}

h1,
h2 {
    margin: 0;
    font-size: 15px;
    font-weight: normal;
}

svg {
    display: block;
    flex: none;
}

.defs {
    position: absolute;
}

.caret,
.drop {
    flex: none;
    width: 6px;
    border: 3px solid transparent;
    border-top: 4px solid #555;
    border-bottom: none;
}

.drop {
    width: 12px;
    border-width: 6px 6px 0;
}

.light {
    border-top-color: #fff;
}

.over {
    width: 8px;
    height: 8px;
    border: none;
    border-top: 2px solid #fff;
}

.over::after {
    content: "";
    display: block;
    margin-top: 2px;
    border: 4px solid transparent;
    border-top-color: #fff;
    border-bottom: none;
}

.blue-icon { color: #4583b8; }
.grey-icon { color: #a6a6a6; }
.gold { color: #c79a3b; }
.pale-gold { color: #c6b687; }
.pale-blue { color: #9eb5c9; }

.app {
    display: flex;
    flex-direction: column;
    height: 100vh;
    overflow: hidden;
    background: #f0f0f0;
    border-bottom: 2px solid #3e3739;
}

/* Title bar and tabs */
.header {
    flex: none;
    display: flex;
    height: 76px;
    background: #2b5797;
    color: #fff;
}

.header-left {
    display: flex;
    flex-direction: column;
    justify-content: space-between;
}

.quick {
    display: flex;
    align-items: center;
    gap: 9px;
    height: 32px;
    padding-left: 2px;
}

.quick-line {
    width: 1px;
    height: 24px;
    background: #c3d0e2;
}

.tabs {
    display: flex;
    margin-left: -16px;
}

.tabs button,
.context-tab button {
    width: 66px;
    height: 35px;
    padding-bottom: 2px;
}

.tabs .active {
    background: #f0f0f0;
    color: #222;
}

.context-tab {
    display: flex;
    flex-direction: column;
    justify-content: space-between;
    border-top: 5px solid #d13438;
    background: #2b4f80;
}

.context-tab span {
    padding: 4px 0 0 22px;
    color: #c9375a;
}

.header-right {
    flex: 1;
    min-width: 0;
    display: flex;
    flex-direction: column;
    justify-content: space-between;
    overflow: hidden;
}

.title-row {
    display: flex;
    align-items: center;
    height: 38px;
}

.title-row h1 {
    flex: 1;
    text-align: center;
    white-space: nowrap;
}

.minimize {
    width: 8px;
    height: 3px;
    margin: 0 15px 0 7px;
    background: #fff;
}

.my-mastercam {
    align-self: flex-end;
    height: 27px;
    margin-right: -37px;
    color: #fff;
    text-decoration: none;
}

/* Ribbon */
.ribbon {
    flex: none;
    display: flex;
    height: 117px;
    overflow: hidden;
    border-bottom: 2px solid #c4c4c4;
}

.group {
    flex: none;
    display: flex;
    flex-direction: column;
    justify-content: space-between;
    margin: 3px 0 4px;
    padding: 2px 5px 0 4px;
    border-right: 1px solid #d2d2d2;
}

.group:last-child {
    padding-right: 16px;
    border: none;
}

.group-cut {
    margin-left: -43px;
}

.group-body {
    display: flex;
}

.group h2 {
    text-align: center;
    color: #666;
}

.big {
    display: flex;
    flex-direction: column;
    align-items: center;
    min-width: 50px;
    padding: 3px 2px 0 3px;
}

.big svg {
    margin-bottom: 3px;
}

.big .drop {
    margin-top: 5px;
    border-width: 6px 5px 0;
}

.stack {
    display: flex;
    flex-direction: column;
    padding: 0 4px 0 3px;
}

.stack button {
    display: flex;
    align-items: center;
    gap: 3px;
    height: 26px;
}

.stack .caret {
    margin-left: 3px;
}

/* Workspace */
.workspace {
    flex: 1;
    min-height: 0;
    display: flex;
}

.toolpaths {
    flex: none;
    display: flex;
    flex-direction: column;
    width: 239px;
    overflow: hidden;
    background: #f0f0f0;
    border-right: 3px solid #d6d6d6;
}

.panel-head {
    display: flex;
    align-items: center;
    justify-content: flex-end;
    gap: 12px;
    height: 41px;
    padding-right: 9px;
    background: #e6e6e6;
}

.panel-head .drop {
    width: 10px;
    border-width: 6px 5px 0;
}

.panel-tools {
    display: flex;
    flex-direction: column;
    gap: 4px;
    width: 228px;
    height: 67px;
    padding-top: 3px;
}

.tool-row {
    display: flex;
    align-items: center;
    border-right: 1px solid #ccc;
}

.tool-row button {
    display: flex;
    align-items: center;
    justify-content: center;
    width: 28px;
    height: 26px;
}

.tool-row .wide {
    width: 43px;
    gap: 9px;
}

.tool-row .on {
    background: #cdcdcd;
}

.tool-row .g1 {
    font-size: 16px;
    color: #5b86ad;
}

.tool-row .caret {
    margin-left: 5px;
}

.tool-row .wide .caret {
    margin-left: 0;
}

.tool-line {
    width: 1px;
    height: 26px;
    margin: 0 5px;
    background: #d0d0d0;
}

.tree {
    flex: 1;
    width: 232px;
    margin: 0;
    padding: 0;
    list-style: none;
    overflow: hidden;
    background: #fff;
    border: 1px solid #ccc;
    border-left: none;
    color: #111;
    line-height: 18px;
}

.tree li {
    height: 18px;
    margin-left: -50px;
    white-space: nowrap;
}

.tree .level-1 {
    margin-left: -30px;
    font-size: 14px;
}

.tree .level-2 {
    margin-left: -12px;
}

.tree .selected {
    width: 203px;
    margin-left: 0;
    background: #cdcdcd;
}

.panel-tabs {
    height: 52px;
    padding-top: 22px;
}

.panel-tabs button {
    width: 50px;
    height: 28px;
    padding-right: 12px;
    background: #e4e4e4;
    border-top: 1px solid #ccc;
    border-bottom: 1px solid #ccc;
}

/* Graphics window */
.viewport {
    flex: 1;
    min-width: 0;
    position: relative;
    overflow: hidden;
    background: #bfbfbf;
}

.part {
    position: absolute;
    left: 341px;
    top: 97px;
    width: 590px;
    height: 490px;
}

.axis-x {
    font-size: 18px;
    fill: #000070;
}

.triad {
    position: absolute;
    left: 30px;
    top: 5px;
    font-size: 14px;
    font-weight: bold;
    fill: #0a9a0a;
}

.triad svg {
    overflow: visible;
}

.triad-right {
    left: auto;
    right: 9px;
    z-index: 1;
    pointer-events: none;
}

.t-x { fill: #f00; }
.t-z { fill: #0000c8; }
.t-o { fill: #000; }

.select-bar {
    position: absolute;
    left: 297px;
    top: 7px;
    display: flex;
    align-items: center;
    justify-content: space-between;
    width: 578px;
    height: 43px;
    padding: 0 27px;
    border-radius: 22px;
    background: #cbcbcb;
    color: #7b7b7b;
}

.cursor-mode {
    display: flex;
    align-items: center;
    gap: 2px;
    padding-bottom: 4px;
    color: #666;
}

.cursor-mode .caret {
    margin-left: 6px;
}

.select-bar .caret {
    border-top-color: #999;
}

.faint {
    color: #b9b9b9;
}

.bar-line {
    width: 1px;
    height: 42px;
    background: #bbb;
}

.bar-on {
    display: flex;
    align-items: center;
    justify-content: center;
    width: 27px;
    height: 42px;
    background: #bccbd0;
}

.quick-masks {
    position: absolute;
    right: 9px;
    top: 45px;
    bottom: 52px;
    display: flex;
    flex-direction: column;
    justify-content: space-between;
}

.quick-masks button {
    width: 42px;
    height: 42px;
    border-radius: 50%;
    background: linear-gradient(135deg, transparent 49%, #bdbdbd 49%, #bdbdbd 51%, transparent 51%), #d3d3d3;
}

.quick-masks .no-slash {
    background: #d3d3d3;
}

.tip {
    position: absolute;
    left: 390px;
    top: 436px;
    padding: 0 4px;
    border: 1px solid #555;
    background: #ffffe1;
    color: #222;
    font-size: 16px;
    line-height: 18px;
}

.scale {
    position: absolute;
    right: 23px;
    bottom: 12px;
    width: 97px;
    border: 1px solid #000;
    border-width: 0 1px;
    color: #000;
    font-size: 12px;
    font-weight: bold;
    line-height: 12px;
    text-align: center;
}

.scale span {
    display: block;
}

.scale span + span {
    border-top: 1px solid #000;
}

/* Levels panel */
.levels {
    flex: none;
    display: flex;
    flex-direction: column;
    width: 318px;
    overflow: hidden;
    border-left: 5px solid #dcdcdc;
}

.levels h2 {
    height: 41px;
    padding-left: 5px;
    background: #e6e6e6;
    font-size: 25px;
    line-height: 40px;
}

.level-tools {
    display: flex;
    align-items: center;
    gap: 10px;
    height: 33px;
    padding-left: 8px;
}

.level-tools .caret {
    margin-right: -2px;
}

.grid {
    margin-left: 14px;
    border: 1px solid #c4c4c4;
    border-right: none;
    overflow: hidden;
    background: #fff;
}

.grid table {
    width: 400px;
    table-layout: fixed;
    border-collapse: separate;
    border-spacing: 0;
    line-height: 18px;
}

.grid th {
    height: 24px;
    padding: 0 5px;
    background: #f0f0f0;
    border-right: 2px solid #ccc;
    border-bottom: 1px solid #ccc;
    text-align: left;
    font-weight: normal;
}

.c-num { width: 71px; }
.c-hi { width: 60px; }
.c-name { width: 93px; }
.c-set { width: 70px; }

.sort {
    float: right;
    margin-top: 8px;
    border: 5px solid transparent;
    border-top: none;
    border-bottom: 7px solid #888;
}

.grid .c-set {
    padding: 0 4px;
}

.grid td {
    height: 20px;
    padding: 0 5px;
    border-right: 1px solid #ececec;
    border-bottom: 1px solid #ececec;
    font-size: 14px;
}

.grid td svg {
    display: inline-block;
    margin-right: 2px;
}

.level-form {
    display: grid;
    grid-template-columns: 123px 1fr;
    gap: 12px 0;
    padding: 6px 0 0 22px;
}

.level-form input[type="text"] {
    width: 100%;
    height: 28px;
    padding: 0 4px 5px;
    border: 1px solid #ccc;
    background: #fff;
    font: inherit;
    font-size: 14px;
}

.level-form input.number {
    width: 82px;
    background: #ffff80;
}

.radios {
    display: flex;
    flex-direction: column;
}

.radios label {
    display: flex;
    align-items: center;
    gap: 5px;
    height: 24px;
}

.radios input[type="radio"] {
    appearance: none;
    width: 14px;
    height: 14px;
    margin: 0 0 0 1px;
    border: 1px solid #999;
    border-radius: 50%;
    background: #fff;
}

.radios input[type="radio"]:checked {
    background: radial-gradient(#333 3px, #fff 4px);
}

.range {
    display: flex;
    gap: 28px;
    margin: 3px -20px 0 17px;
}

.level-form .range input {
    width: 70px;
    flex: none;
    background: #f0f0f0;
    border-color: #aaa;
    color: #777;
}

/* Status bar */
.status {
    flex: none;
    display: flex;
    align-items: center;
    height: 29px;
    padding: 0 0 2px 548px;
    border-top: 1px solid #ccc;
    white-space: nowrap;
    overflow: hidden;
}

.status > * {
    flex: none;
}

.status button {
    display: flex;
    align-items: center;
    color: #111;
}

.status b {
    margin-left: 12px;
    font-weight: normal;
}

.status .caret {
    margin-left: 11px;
}

.s-view { width: 115px; }
.s-sel { width: 183px; }
.s-x { width: 129px; }
.s-y { width: 123px; }
.status .s-z { width: 110px; }
.status .s-3d { width: 33px; }
.status .s-plane { width: 139px; }
.status .s-wcs { width: 119px; }

.shades {
    display: flex;
    gap: 13px;
}

/* Context menus */
.menu {
    position: absolute;
    margin: 0;
    padding: 2px;
    list-style: none;
    background: #f1f1f1;
    border: 1px solid #ccc;
    box-shadow: 3px 3px 3px rgba(0, 0, 0, 0.4);
    color: #000;
}

.menu button {
    display: flex;
    align-items: center;
    justify-content: space-between;
    width: 100%;
    height: 24px;
    padding: 0 8px 0 34px;
    text-align: left;
}

.menu button:disabled {
    color: #7a7a7a;
}

.menu .open {
    background: #91c8f2;
}

.menu .sub::after {
    content: "";
    width: 6px;
    height: 6px;
    border: 1px solid currentColor;
    border-width: 1px 1px 0 0;
    transform: rotate(45deg);
}

.menu .sep {
    height: 7px;
    margin-left: 29px;
    padding-top: 3px;
}

.menu .sep::after {
    content: "";
    display: block;
    border-top: 1px solid #d5d5d5;
}

.menu-main {
    left: 41px;
    top: 454px;
    width: 229px;
}

.menu-mill {
    left: 268px;
    top: 367px;
    width: 267px;
}

.menu-mill button {
    padding-right: 11px;
}

.menu-hst {
    left: 529px;
    top: 511px;
    width: 158px;
}

.click-spot {
    position: absolute;
    left: 377px;
    top: 499px;
    width: 62px;
    height: 62px;
    border-radius: 50%;
    background: rgba(250, 250, 10, 0.8);
}
```
